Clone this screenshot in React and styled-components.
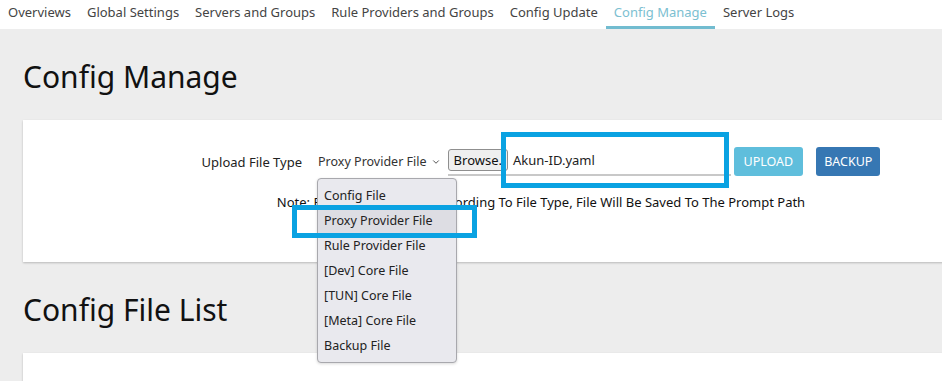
import React from "react";
import styled, { createGlobalStyle } from "styled-components";
import { ChevronDown } from "lucide-react";

const GlobalStyle = createGlobalStyle`
  html, body {
    margin: 0;
    padding: 0;
    background: #ededed;
    overflow: hidden;
  }
  body {
    font-family: "Noto Sans", "Open Sans", sans-serif;
    color: #222;
  }
`;

const Tabs = styled.ul`
  display: flex;
  margin: 0;
  padding: 0;
  list-style: none;
  height: 29px;
  background: #fff;
`;

const Tab = styled.li`
  padding: 0 8px;
  height: 29px;
  line-height: 25px;
  font-size: 13px;
  white-space: nowrap;
  color: ${p => (p.active ? "#7cc0d1" : "#444")};
  border-bottom: 3px solid ${p => (p.active ? "#72bcd0" : "transparent")};
  box-sizing: border-box;
`;

const Main = styled.main`
  padding: 0 0 0 23px;
  overflow: hidden;
`;

const Heading = styled.h2`
  margin: 0;
  padding: 28px 0 0;
  height: 91px;
  box-sizing: border-box;
  font-size: 30px;
  font-weight: 400;
  line-height: 40px;
  color: #111;
`;

const Card = styled.section`
  width: 1036px;
  min-height: ${p => p.height || 142}px;
  background: #fff;
  box-shadow: 0 1px 2px rgba(0, 0, 0, 0.22);
  box-sizing: border-box;
  padding-top: 27px;
  display: flex;
  flex-direction: column;
  align-items: center;
`;

const UploadRow = styled.div`
  display: flex;
  align-items: center;
  height: 29px;
  font-size: 13px;
`;

const Label = styled.span`
  color: #222;
  margin-right: 16px;
`;

const SelectWrap = styled.div`
  position: relative;
  margin-right: 7px;
`;

const SelectBox = styled.div`
  display: flex;
  align-items: center;
  gap: 4px;
  font-size: 12.5px;
  color: #333;
  svg {
    margin-top: 1px;
  }
`;

const Popup = styled.ul`
  position: absolute;
  z-index: 2;
  top: 25px;
  left: -1px;
  width: 138px;
  margin: 0;
  padding: 4px 0;
  list-style: none;
  background: #e9e9ee;
  border: 1px solid #a8a8ad;
  border-radius: 4px;
  box-shadow: 0 1px 3px rgba(0, 0, 0, 0.15);
`;

const Option = styled.li`
  position: relative;
  height: 25px;
  line-height: 25px;
  padding-left: 6px;
  font-size: 12.5px;
  color: #222;
  background: ${p => (p.selected ? "#dddde3" : "transparent")};
`;

const Marker = styled.span`
  position: absolute;
  border: 5px solid #0aa2e2;
  pointer-events: none;
  z-index: 3;
`;

const OptionMarker = styled(Marker)`
  left: -26px;
  right: -21px;
  top: -3px;
  bottom: -5px;
`;

const FileField = styled.div`
  position: relative;
  display: flex;
  align-items: center;
  width: 283px;
  height: 27px;
  box-sizing: border-box;
  padding-bottom: 3px;
  margin-top: 2px;
  border-bottom: 2px solid #c8c8c8;
`;

const FileMarker = styled(Marker)`
  left: 53px;
  right: 2px;
  top: -17px;
  bottom: -14px;
`;

const Browse = styled.span`
  display: inline-block;
  height: 22px;
  line-height: 20px;
  box-sizing: border-box;
  padding: 0 5px;
  border: 1px solid #8f8f8f;
  border-radius: 3px;
  background: #efefef;
  color: #111;
  font-size: 13px;
  margin-right: 5px;
`;

const FileName = styled.span`
  color: #222;
`;

const Button = styled.button`
  height: 29px;
  padding: 0 ${p => p.pad}px;
  margin-left: ${p => p.gap}px;
  border: none;
  border-radius: 3px;
  font-family: inherit;
  font-size: 12.5px;
  color: #fff;
  background: ${p => p.bg};
  text-transform: uppercase;
`;

const Note = styled.p`
  margin: 17px 0 0;
  font-size: 13px;
  color: #111;
`;

const tabs = [
  "Overviews",
  "Global Settings",
  "Servers and Groups",
  "Rule Providers and Groups",
  "Config Update",
  "Config Manage",
  "Server Logs",
];

const fileTypes = [
  "Config File",
  "Proxy Provider File",
  "Rule Provider File",
  "[Dev] Core File",
  "[TUN] Core File",
  "[Meta] Core File",
  "Backup File",
];

export default function App() {
  return (
    <>
      <GlobalStyle />
      <Tabs>
        {tabs.map(t => (
          <Tab key={t} active={t === "Config Manage"}>
            {t}
          </Tab>
        ))}
      </Tabs>
      <Main>
        <Heading>Config Manage</Heading>
        <Card>
          <UploadRow>
            <Label>Upload File Type</Label>
            <SelectWrap>
              <SelectBox>
                Proxy Provider File
                <ChevronDown size={10} strokeWidth={2} />
              </SelectBox>
              <Popup>
                {fileTypes.map(f => (
                  <Option key={f} selected={f === "Proxy Provider File"}>
                    {f}
                    {f === "Proxy Provider File" && <OptionMarker />}
                  </Option>
                ))}
              </Popup>
            </SelectWrap>
            <FileField>
              <Browse>Browse.</Browse>
              <FileName>Akun-ID.yaml</FileName>
              <FileMarker />
            </FileField>
            <Button gap={3} pad={10} bg="#5fbedc">
              Upload
            </Button>
            <Button gap={13} pad={8} bg="#3677b3">
              Backup
            </Button>
          </UploadRow>
          <Note>
            Note: Please Upload Files According To File Type, File Will Be
            Saved To The Prompt Path
          </Note>
        </Card>
        <Heading>Config File List</Heading>
        <Card height={60} />
      </Main>
    </>
  );
}
